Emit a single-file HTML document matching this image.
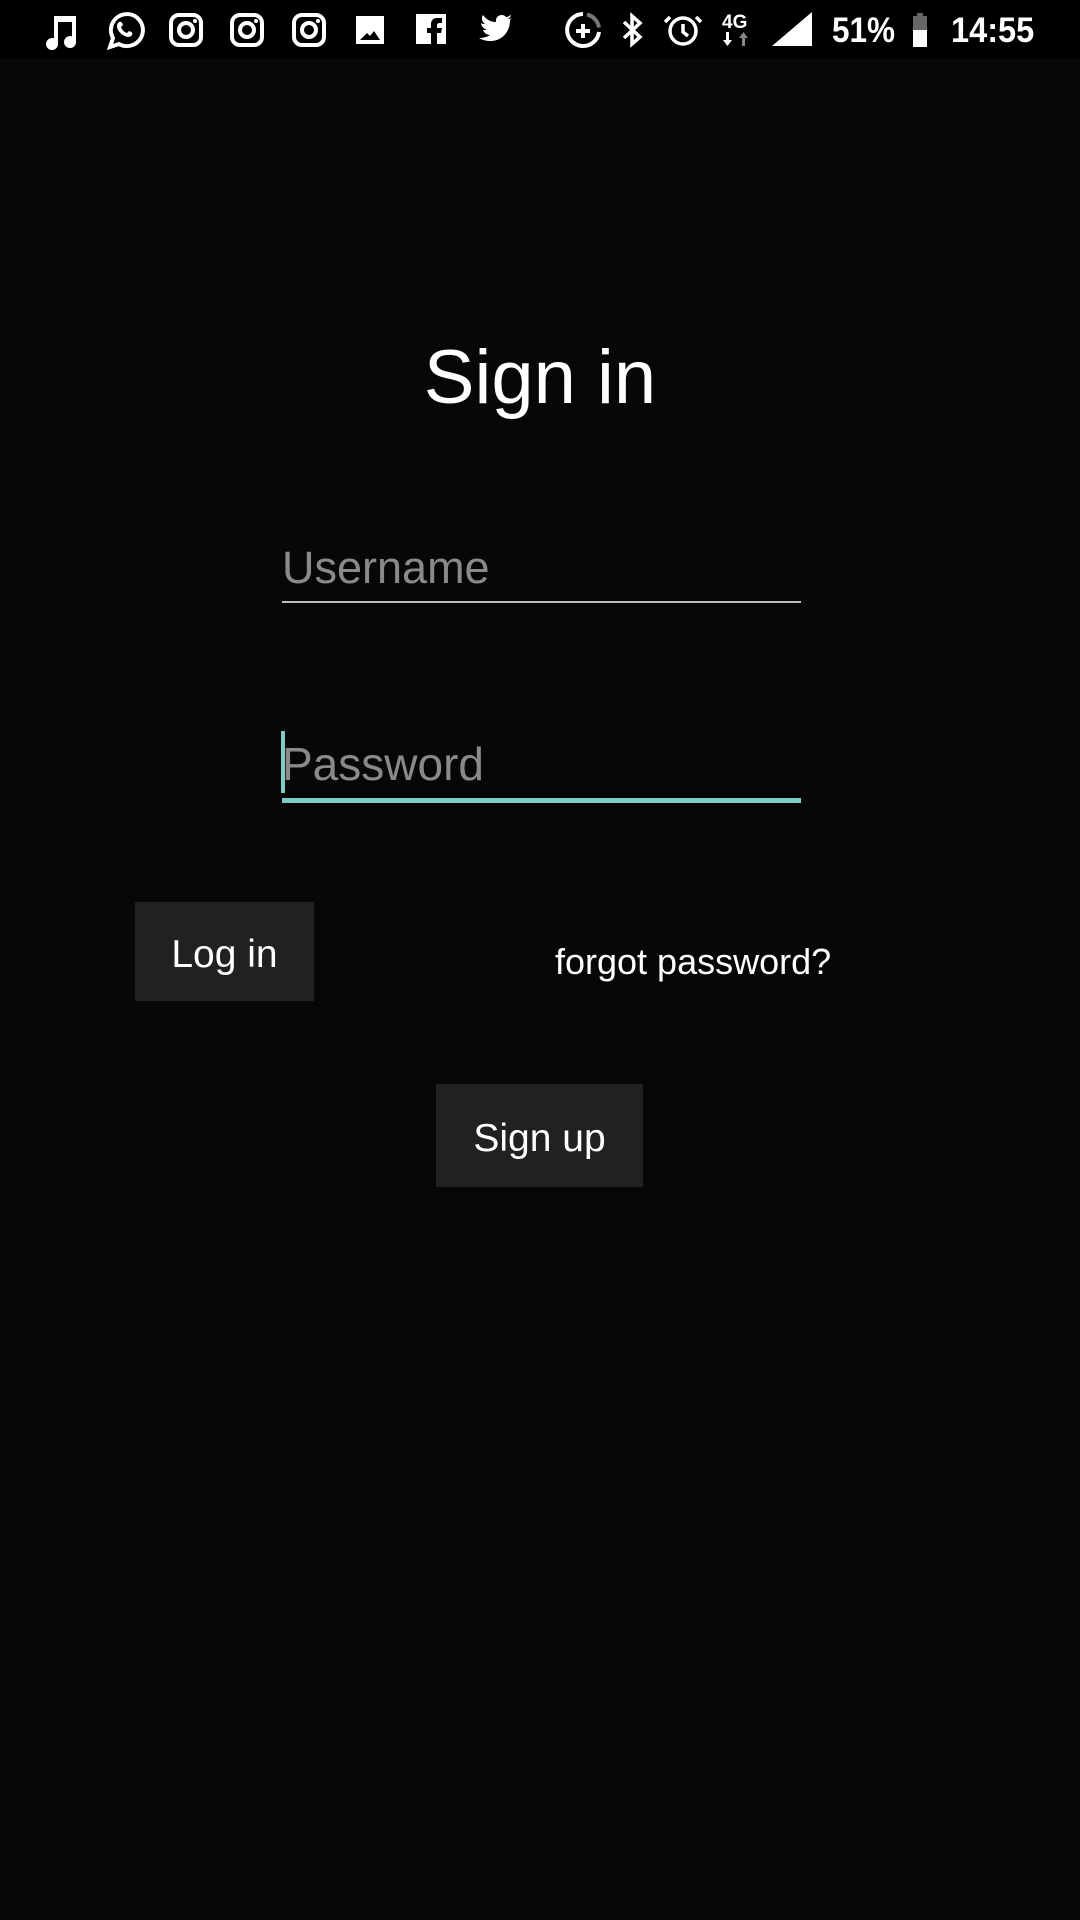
<!DOCTYPE html>
<html><head><meta charset="utf-8"><style>
body{margin:0;width:1080px;height:1920px;background:#070707;position:relative;overflow:hidden;font-family:"Liberation Sans",sans-serif;color:#fff}
.sb{position:absolute;left:0;top:0;width:1080px;height:59px;background:#000}
.t{position:absolute;white-space:nowrap;line-height:1}
.btn{position:absolute;background:#212121}
svg{position:absolute}
</style></head><body>
<div class="sb">
<svg width="1080" height="59" viewBox="0 0 1080 59" fill="#fff" stroke="#fff">
<g stroke="none"><path d="M54 16h22v26a6 6 0 1 1-4-5.6V22h-14v22a6 6 0 1 1-4-5.6z"/></g>
<g fill="none" stroke-width="4"><path d="M110 47l3-9a16 16 0 1 1 6 6z"/></g>
<path stroke="none" d="M119 22c2-1 3 0 4 3l-2 2c1 3 3 5 6 6l2-2c3 1 4 2 3 4-2 3-6 2-9 0s-6-5-6-9c0-2 1-3 2-4z"/>
<g fill="none" stroke-width="4">
<rect x="171" y="15" width="30" height="30" rx="8"/><circle cx="186" cy="30" r="7"/>
<rect x="232" y="15" width="30" height="30" rx="8"/><circle cx="247" cy="30" r="7"/>
<rect x="294" y="15" width="30" height="30" rx="8"/><circle cx="309" cy="30" r="7"/>
</g>
<g stroke="none"><circle cx="195" cy="21" r="2"/><circle cx="256" cy="21" r="2"/><circle cx="318" cy="21" r="2"/></g>
<path stroke="none" d="M356 16h28v28h-28z M360 40h20l-6-9-4 5-3-3z" fill-rule="evenodd"/>
<path stroke="none" d="M416 14h30v30h-9V33h4l1-5h-5v-3c0-1 1-2 2-2h3v-5h-5c-4 0-6 3-6 6v4h-4v5h4v11h-15z"/>
<path stroke="none" d="M512 18c-2 1-3 1-4 1 1-1 3-2 3-4-2 1-3 2-5 2-3-4-11-2-10 5-6 0-10-3-13-7-2 3-1 7 2 9-1 0-3 0-4-1 0 3 3 6 6 7-1 0-3 0-4 0 1 3 4 5 7 5-3 2-7 3-11 3 14 8 31 0 31-18 1-1 2-2 2-2z"/>
<g fill="none" stroke-width="4"><path d="M583 14a16 16 0 1 0 16 18" /><path d="M587 14.5a16 16 0 0 1 12 13" stroke="#777"/></g>
<path stroke="none" d="M581 24h4v5h5v4h-5v5h-4v-5h-5v-4h5z"/>
<path fill="none" stroke-width="3.5" d="M624 22l16 15-8 7V16l8 7-16 15"/>
<g fill="none" stroke-width="3.5"><circle cx="683" cy="31" r="13"/><path d="M683 24v8l5 4M670 17l-5 5M696 17l5 5"/></g>
<text x="722" y="28" font-size="19" font-weight="bold" stroke="none" font-family="Liberation Sans">4G</text>
<path stroke="none" d="M726 32h3v8h3l-4.5 6-4.5-6h3z"/><path stroke="none" fill="#888" d="M745 46h-3v-8h-3l4.5-6 4.5 6h-3z"/>
<path stroke="none" d="M772 46L812 12v34z"/>
<path stroke="none" fill="#666" d="M913 16h4v-3h6v3h4v14h-14z"/><path stroke="none" d="M913 30h14v17h-14z"/>
</svg>
<div class="t" style="left:832px;top:13px;font-size:35px;font-weight:bold;transform:scaleX(0.9);transform-origin:left">51%</div>
<div class="t" style="left:951px;top:13px;font-size:35px;font-weight:bold;transform:scaleX(0.93);transform-origin:left">14:55</div>
</div>

<div class="t" style="left:0;width:1080px;text-align:center;top:340px;font-size:76px">Sign in</div>

<div class="t" style="left:282px;top:545px;font-size:45px;color:#8a8a8a">Username</div>
<div style="position:absolute;left:282px;top:601px;width:519px;height:2px;background:#bdbdbd"></div>

<div class="t" style="left:282px;top:741px;font-size:46px;color:#8a8a8a">Password</div>
<div style="position:absolute;left:281px;top:731px;width:4px;height:62px;background:#80cbc4"></div>
<div style="position:absolute;left:282px;top:798px;width:519px;height:5px;background:#80cbc4"></div>

<div class="btn" style="left:135px;top:902px;width:179px;height:99px"></div>
<div class="t" style="left:135px;width:179px;text-align:center;top:935px;font-size:39px">Log in</div>

<div class="t" style="left:555px;top:944px;font-size:36px">forgot password?</div>

<div class="btn" style="left:436px;top:1084px;width:207px;height:103px"></div>
<div class="t" style="left:436px;width:207px;text-align:center;top:1119px;font-size:39px">Sign up</div>
</body></html>
